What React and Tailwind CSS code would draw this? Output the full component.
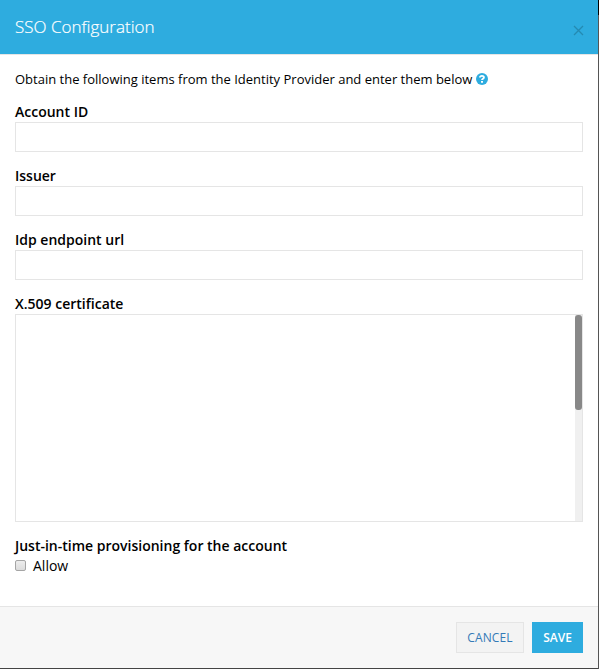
function Field({ label }) {
  return (
    <div className="mb-[14px]">
      <label className="block h-5 text-sm leading-5 font-semibold">{label}</label>
      <input className="block h-[30px] w-full border border-[#e5e5e5] bg-white px-2 outline-none" />
    </div>
  );
}

function HelpIcon() {
  return (
    <svg className="ml-1 h-3 w-3 shrink-0" viewBox="0 0 12 12" fill="none">
      <circle cx="6" cy="6" r="6" fill="#2eacdf" />
      <path d="M3.9 4.5C4.1 2.4 7.9 2.3 7.9 4.5 7.9 5.7 6 5.7 6 7.1" stroke="white" strokeWidth="1.9" />
      <path d="M5 7.9H7V9.7H5Z" fill="white" />
    </svg>
  );
}

export default function App() {
  return (
    <div className="flex h-[669px] w-[599px] overflow-hidden bg-white font-['Open_Sans',sans-serif] text-black">
      <div className="flex h-full w-[598px] flex-col border-b border-[#444]">
        <header className="flex h-[55px] shrink-0 items-center justify-between border-b border-[#e5e5e5] bg-[#2eacdf] px-[15px] text-white">
          <h1 className="text-[17px] leading-[26px] font-light [-webkit-text-stroke:0.2px_white]">SSO Configuration</h1>
          <svg className="mt-[7px] -mr-px h-[11px] w-[11px]" viewBox="0 0 11 11" stroke="#248ab2" strokeWidth="1.3">
            <path d="M1 1 10 10M10 1 1 10" />
          </svg>
        </header>
        <main className="flex-1 px-[15px] pt-[14px]">
          <p className="mb-[13px] flex h-5 items-center text-[13px] leading-5">
            <span>Obtain the following items from the Identity Provider and enter them below</span>
            <HelpIcon />
          </p>
          <Field label="Account ID" />
          <Field label="Issuer" />
          <Field label="Idp endpoint url" />
          <label className="block h-5 text-sm leading-5 font-semibold">X.509 certificate</label>
          <div className="flex h-[208px] justify-end border border-[#e5e5e5]">
            <div className="w-[7px] bg-[#f0f0f0]">
              <div className="h-[95px] rounded-[3px] bg-[#888]" />
            </div>
          </div>
          <div className="mt-[14px] h-5 text-sm leading-5 font-semibold">Just-in-time provisioning for the account</div>
          <label className="flex h-5 items-center text-sm leading-5">
            <span className="mr-[7px] mb-px h-[11px] w-[11px] rounded-[2px] border border-[#a5a5a5] bg-gradient-to-b from-[#ededed] to-[#dcdcdc]" />
            Allow
          </label>
        </main>
        <footer className="flex h-[62px] shrink-0 justify-end gap-2 border-t border-[#e5e5e5] bg-[#f7f7f7] pt-[15px] pr-[15px]">
          <button className="h-[31px] w-[68px] border border-[#e5e5e5] bg-[#f3f3f3] text-xs tracking-[0.15px] text-[#337ab7]">CANCEL</button>
          <button className="h-[31px] w-[51px] bg-[#2eacdf] text-xs font-semibold text-white">SAVE</button>
        </footer>
      </div>
      <div className="h-full w-px bg-[#555]">
        <div className="h-[15px] bg-black" />
      </div>
    </div>
  );
}
